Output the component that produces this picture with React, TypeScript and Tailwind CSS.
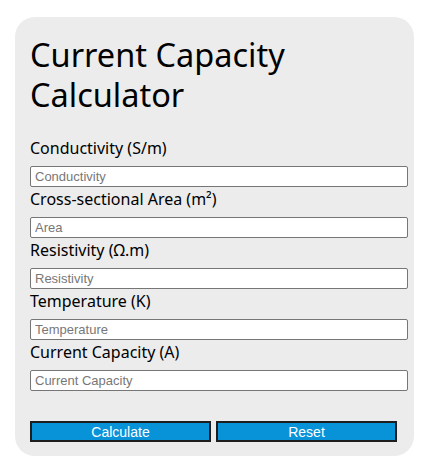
import React from 'react';

const fields = [
  { label: 'Conductivity (S/m)', placeholder: 'Conductivity' },
  { label: 'Cross-sectional Area (m²)', placeholder: 'Area' },
  { label: 'Resistivity (Ω.m)', placeholder: 'Resistivity' },
  { label: 'Temperature (K)', placeholder: 'Temperature' },
  { label: 'Current Capacity (A)', placeholder: 'Current Capacity' },
];

export default function App() {
  return (
    <div className="w-[440px] h-[470px] bg-white pt-[17px] pl-[15px]">
      <div className="w-[399px] rounded-[20px] bg-[#ececec] pt-[18px] pb-[14px] pl-[15px] pr-[6px] font-['Noto_Sans',sans-serif] text-black">
        <h1 className="text-[32.5px] leading-[40px] font-normal mb-[21px]">
          Current Capacity Calculator
        </h1>
        {fields.map((f) => (
          <div key={f.placeholder}>
            <label className="block text-[16px] leading-6 mb-1.5">{f.label}</label>
            <input
              type="text"
              placeholder={f.placeholder}
              className="block w-[378px] h-[21px] bg-white border border-[#767676] rounded-[2px] px-1 text-[13px] font-['Liberation_Sans',sans-serif] placeholder:text-[#777] outline-none"
            />
          </div>
        ))}
        <div className="flex gap-[5px] mt-[30px]">
          <button className="w-[181px] h-[21px] bg-[#0892d8] border-2 border-[#1e1e1e] text-white text-[14px] leading-none font-['Liberation_Sans',sans-serif]">
            Calculate
          </button>
          <button className="w-[181px] h-[21px] bg-[#0892d8] border-2 border-[#1e1e1e] text-white text-[14px] leading-none font-['Liberation_Sans',sans-serif]">
            Reset
          </button>
        </div>
      </div>
    </div>
  );
}
